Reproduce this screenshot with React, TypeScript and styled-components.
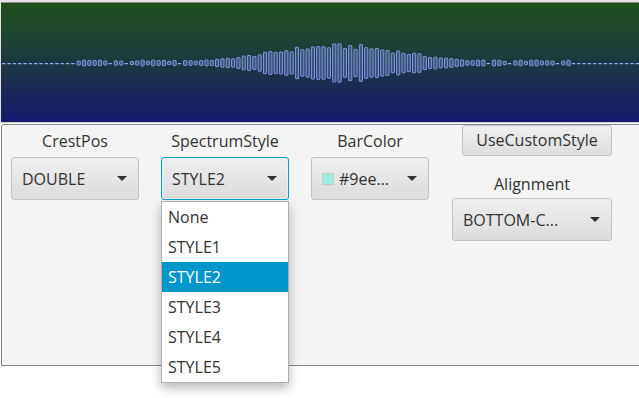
import * as React from 'react';
import styled, { createGlobalStyle } from 'styled-components';

const GlobalStyle = createGlobalStyle`
    html, body {
        margin: 0;
        padding: 0;
        background: #ffffff;
        font-family: "Open Sans", "Noto Sans", sans-serif;
    }
`

const BAR_COUNT = 120
const PITCH = 5.325
const WAVE_W = 638
const WAVE_H = 119
const MID = 60

// small deterministic noise so the bars look like a real spectrum
function noise(i: number) {
    const s = Math.sin(i * 12.9898 + 78.233) * 43758.5453
    return s - Math.floor(s)
}

const bars = Array.from({ length: BAR_COUNT }, (_, i) => {
    const x = i * PITCH + 1
    const env = 39 * Math.exp(-Math.pow((x - 335) / 95, 2))
    let h = env * (0.7 + 0.3 * noise(i))
    if (x > 75 && x < 570) {
        h = Math.max(h, noise(i + 300) < 0.22 ? 1 : 3 + 3 * noise(i + 77))
    } else {
        h = 1
    }
    return { x, h }
})

function Waveform() {
    return (
        <svg width={WAVE_W} height={WAVE_H} style={{ display: 'block' }}>
            {bars.map((b, i) => b.h < 2.5
                ? <rect key={i} x={b.x} y={MID} width={3.4} height={1.2} fill="#8fa9f2" />
                : <rect key={i} x={b.x + 0.5} y={MID - b.h / 2} width={3.2} height={b.h}
                    fill="rgba(112,132,214,0.4)" stroke="#8398df" strokeWidth={1} rx={0.5} />
            )}
        </svg>
    )
}

type ComboProps = { value: string, width: number, focused?: boolean, swatch?: string }
const Combo = ({ value, width, focused, swatch }: ComboProps) => (
    <ComboBox $width={width} $focused={focused}>
        {swatch && <Swatch $color={swatch} />}
        <ComboText>{value}</ComboText>
        <Arrow />
    </ComboBox>
)

const styleOptions = ['None', 'STYLE1', 'STYLE2', 'STYLE3', 'STYLE4', 'STYLE5']

export default function App() {
    return (
        <Page>
            <GlobalStyle />
            <CanvasFrame>
                <Canvas><Waveform /></Canvas>
            </CanvasFrame>
            <Panel>
                <Column>
                    <Label>CrestPos</Label>
                    <Combo value="DOUBLE" width={128} />
                </Column>
                <Column>
                    <Label>SpectrumStyle</Label>
                    <DropAnchor>
                        <Combo value="STYLE2" width={128} focused />
                        <Popup>
                            {styleOptions.map(o =>
                                <PopupItem key={o} $selected={o === 'STYLE2'}>{o}</PopupItem>
                            )}
                        </Popup>
                    </DropAnchor>
                </Column>
                <Column>
                    <Label>BarColor</Label>
                    <Combo value="#9ee..." width={118} swatch="#9eeedd" />
                </Column>
                <RightColumn>
                    <Button>UseCustomStyle</Button>
                    <AlignLabel>Alignment</AlignLabel>
                    <Combo value="BOTTOM-C..." width={160} />
                </RightColumn>
            </Panel>
        </Page>
    )
}

const Page = styled.div`
    width: 639px;
    height: 398px;
    display: flex;
    flex-direction: column;
    overflow: hidden;
`
const CanvasFrame = styled.div`
    background: #e4e4e4;
    padding: 2px 0 0 1px;
    border-bottom: 1px solid #cfcfcf;
`
const Canvas = styled.div`
    height: ${WAVE_H}px;
    background: linear-gradient(#1f501b 0%, #1b3c3e 45%, #17186f 100%);
    border-top: 1px solid #8a8a8a;
`
const Panel = styled.div`
    margin: 1px -4px 0 1px;
    height: 240px;
    border: 1px solid #858585;
    border-radius: 3px 3px 0 0;
    background: #f4f4f4;
    display: flex;
    align-items: flex-start;
    gap: 22px;
    padding-left: 9px;
`
const Column = styled.div`
    display: flex;
    flex-direction: column;
    align-items: center;
    padding-top: 5px;
    gap: 5px;
`
const RightColumn = styled.div`
    display: flex;
    flex-direction: column;
    align-items: center;
    width: 160px;
    margin-left: 1px;
`
const Label = styled.div`
    font-size: 16px;
    line-height: 22px;
    color: #333333;
`
const AlignLabel = styled(Label)`
    margin-top: 17px;
    margin-bottom: 3px;
`
const Button = styled.div`
    align-self: flex-end;
    box-sizing: border-box;
    width: 150px;
    height: 31px;
    border: 1px solid #c2c2c2;
    border-radius: 3px;
    background: linear-gradient(#f0f0f0, #dedede);
    font-size: 16px;
    line-height: 29px;
    text-align: center;
    color: #333333;
`
const ComboBox = styled.div<{ $width: number, $focused?: boolean }>`
    box-sizing: border-box;
    width: ${p => p.$width}px;
    height: 43px;
    display: flex;
    align-items: center;
    padding: 0 10px;
    border: 1px solid ${p => p.$focused ? '#039ed3' : '#c4c4c4'};
    box-shadow: ${p => p.$focused ? 'inset 0 0 0 1px #dff3fb' : 'none'};
    border-radius: 3px;
    background: linear-gradient(#efefef, #dcdcdc);
    color: #333333;
`
const ComboText = styled.span`
    flex: 1;
    font-size: 16px;
    white-space: nowrap;
`
const Swatch = styled.span<{ $color: string }>`
    width: 12px;
    height: 12px;
    margin-right: 5px;
    box-sizing: border-box;
    border: 1px solid #c9c9c9;
    background: ${p => p.$color};
`
const Arrow = styled.span`
    width: 0;
    height: 0;
    border-left: 5px solid transparent;
    border-right: 5px solid transparent;
    border-top: 5px solid #333333;
    margin-right: 1px;
`
const DropAnchor = styled.div`
    position: relative;
`
const Popup = styled.div`
    position: absolute;
    top: 44px;
    left: 0;
    width: 128px;
    box-sizing: border-box;
    background: #ffffff;
    border: 1px solid #b0b0b0;
    box-shadow: 0 5px 10px rgba(0, 0, 0, 0.28);
    z-index: 5;
`
const PopupItem = styled.div<{ $selected: boolean }>`
    height: 30px;
    line-height: 30px;
    padding-left: 6px;
    font-size: 16px;
    color: ${p => p.$selected ? '#ffffff' : '#333333'};
    background: ${p => p.$selected ? '#0096c9' : 'transparent'};
`
